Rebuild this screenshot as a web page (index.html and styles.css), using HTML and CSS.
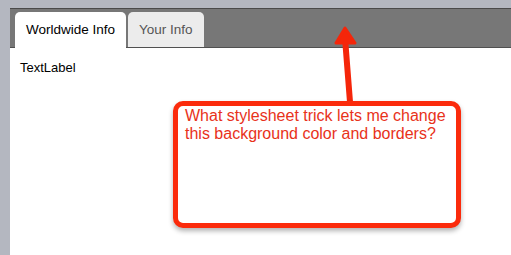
FILE: index.html
```html
<!DOCTYPE html>
<html lang="en">
<head>
  <meta charset="UTF-8">
  <title>Tabs</title>
  <link rel="stylesheet" href="styles.css">
</head>
<body>

  <div class="window">
    <div class="tabbar">
      <div class="tab active">Worldwide Info</div>
      <div class="tab">Your Info</div>
    </div>
    <div class="page">
      <div class="label">TextLabel</div>
    </div>
  </div>

  <!-- annotation -->
  <svg class="arrow" width="40" height="80" viewBox="0 0 40 80">
    <path d="M17 12 L22 76" stroke="#f5260a" stroke-width="6" stroke-linecap="round" fill="none"/>
    <path d="M17 2 L27 17 L8 17 Z" fill="#f5260a" stroke="#f5260a" stroke-width="3" stroke-linejoin="round"/>
  </svg>
  <div class="callout">What stylesheet trick lets me change this background color and borders?</div>

</body>
</html>
```

FILE: styles.css
```css
body {
  margin: 0;
  background: #b4b7c0;
  font-family: 'Liberation Sans', Arial, sans-serif;
  height: 255px;
  overflow: hidden;
}

.window {
  margin: 8px 0 0 10px;
  background: #fff;
  height: 247px;
}

.tabbar {
  height: 38px;
  background: #777;
  border-top: 1px solid #4a4a4a;
  border-bottom: 1px solid #505050;
  display: flex;
  align-items: flex-end;
  padding-left: 5px;
  gap: 2px;
}

.tab {
  height: 35px;
  box-sizing: border-box;
  padding: 10px 11px 0;
  font-size: 13.5px;
  color: #555;
  background: #ececec;
  border-radius: 5px 5px 0 0;
}

.tab.active {
  background: #fff;
  color: #000;
  height: 36px;
  margin-bottom: -1px;
}

.page {
  padding: 12px 10px;
}

.label {
  font-size: 13px;
  color: #000;
}

.arrow {
  position: absolute;
  left: 328px;
  top: 26px;
}

.callout {
  position: absolute;
  left: 173px;
  top: 101px;
  width: 271px;
  height: 116px;
  border: 5px solid #fb2b0c;
  border-radius: 10px;
  background: #fff;
  color: #e8321a;
  font-size: 16px;
  line-height: 18px;
  padding: 1px 0 0 7px;
  box-shadow: 0 3px 5px rgba(0,0,0,0.3);
}
```
